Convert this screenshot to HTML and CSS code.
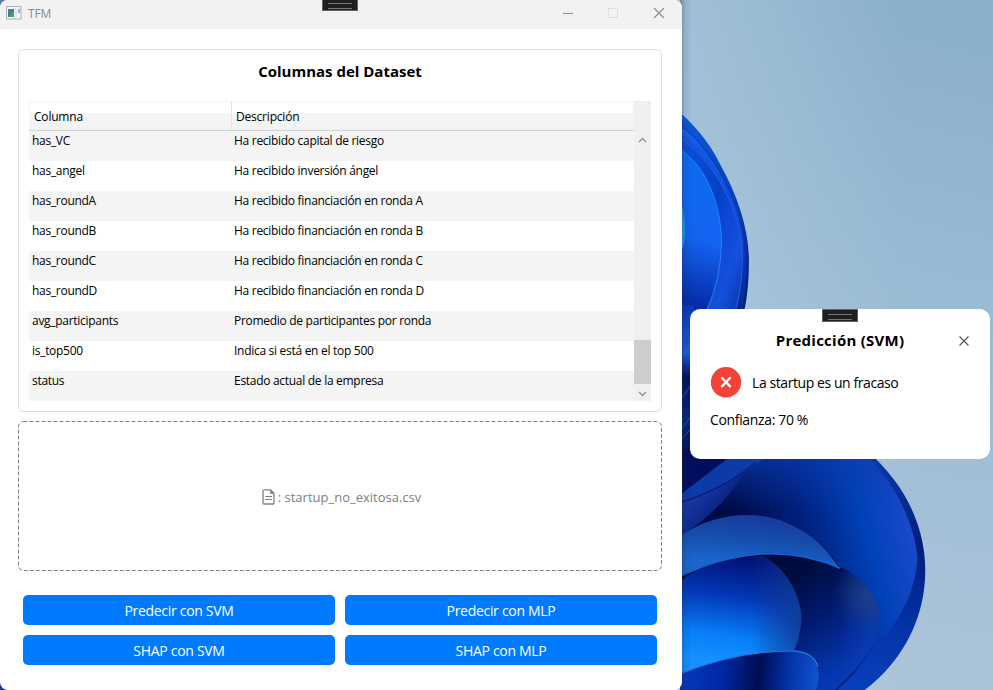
FILE: index.html
```
<!DOCTYPE html>
<html lang="es">
<head>
<meta charset="utf-8">
<title>TFM</title>
<link rel="stylesheet" href="styles.css">
</head>
<body>
<svg class="wallpaper" viewBox="0 0 993 690" aria-hidden="true">
  <defs>
    <linearGradient id="sky" gradientUnits="userSpaceOnUse" x1="960" y1="0" x2="800" y2="690"><stop offset="0" stop-color="#8aafcb"/><stop offset=".45" stop-color="#9bbcd5"/><stop offset="1" stop-color="#adc4d9"/></linearGradient>
    <linearGradient id="skyLeft" gradientUnits="userSpaceOnUse" x1="682" y1="0" x2="900" y2="0"><stop offset="0" stop-color="#b4cfe0" stop-opacity=".5"/><stop offset="1" stop-color="#b4cfe0" stop-opacity="0"/></linearGradient>
    <linearGradient id="p1" x1="0" y1="0" x2="0" y2="1"><stop offset="0" stop-color="#0f5cdf"/><stop offset=".5" stop-color="#0738b5"/><stop offset="1" stop-color="#001560"/></linearGradient>
    <linearGradient id="p2" x1="0" y1="0" x2="0" y2="1"><stop offset="0" stop-color="#1064ee"/><stop offset=".5" stop-color="#0f49d2"/><stop offset="1" stop-color="#03248c"/></linearGradient>
    <linearGradient id="p3" x1="0" y1="0" x2="1" y2="1"><stop offset="0" stop-color="#0b55e0"/><stop offset=".5" stop-color="#0541c8"/><stop offset=".8" stop-color="#1550dc"/><stop offset="1" stop-color="#0534ac"/></linearGradient>
    <linearGradient id="p4" gradientUnits="userSpaceOnUse" x1="718" y1="190" x2="682" y2="300"><stop offset="0" stop-color="#0d68f2"/><stop offset=".45" stop-color="#1563f0"/><stop offset="1" stop-color="#062ba8"/></linearGradient>
    <linearGradient id="strip" x1="0" y1="0" x2="0" y2="1"><stop offset="0" stop-color="#0938b8"/><stop offset=".3" stop-color="#1a5cdf"/><stop offset=".45" stop-color="#020f5d"/><stop offset=".7" stop-color="#062583"/><stop offset="1" stop-color="#010a48"/></linearGradient>
    <linearGradient id="outer" x1="0" y1="0" x2="0" y2="1"><stop offset="0" stop-color="#0b3cab"/><stop offset=".4" stop-color="#001d7c"/><stop offset=".75" stop-color="#0434a8"/><stop offset="1" stop-color="#0740bd"/></linearGradient>
    <linearGradient id="face" gradientUnits="userSpaceOnUse" x1="735" y1="545" x2="918" y2="500"><stop offset="0" stop-color="#000a45"/><stop offset=".38" stop-color="#00207e"/><stop offset=".7" stop-color="#0042b8"/><stop offset="1" stop-color="#214bd0"/></linearGradient>
    <linearGradient id="faceTop" gradientUnits="userSpaceOnUse" x1="0" y1="450" x2="0" y2="510"><stop offset="0" stop-color="#0b3cb0" stop-opacity=".7"/><stop offset="1" stop-color="#0b3cb0" stop-opacity="0"/></linearGradient>
    <linearGradient id="band" gradientUnits="userSpaceOnUse" x1="740" y1="515" x2="735" y2="562"><stop offset="0" stop-color="#183b9c"/><stop offset=".5" stop-color="#154ead"/><stop offset="1" stop-color="#1a66cc"/></linearGradient>
    <linearGradient id="hollow" gradientUnits="userSpaceOnUse" x1="800" y1="570" x2="860" y2="660"><stop offset="0" stop-color="#000b3d"/><stop offset=".45" stop-color="#001a6f"/><stop offset="1" stop-color="#0638b3"/></linearGradient>
    <radialGradient id="hollowEdge" gradientUnits="userSpaceOnUse" cx="868" cy="595" r="36"><stop offset="0" stop-color="#2e4a80" stop-opacity=".6"/><stop offset="1" stop-color="#2e4a80" stop-opacity="0"/></radialGradient>
    <linearGradient id="hollowFade" gradientUnits="userSpaceOnUse" x1="840" y1="0" x2="884" y2="0"><stop offset="0" stop-color="#0a3fb4" stop-opacity="0"/><stop offset="1" stop-color="#0a3fb4" stop-opacity=".75"/></linearGradient>
    <linearGradient id="bright" gradientUnits="userSpaceOnUse" x1="750" y1="557" x2="735" y2="665"><stop offset="0" stop-color="#001070"/><stop offset=".38" stop-color="#0238b8"/><stop offset=".75" stop-color="#087ff8"/><stop offset="1" stop-color="#1690ff"/></linearGradient>
    <linearGradient id="brightEdge" gradientUnits="userSpaceOnUse" x1="750" y1="0" x2="802" y2="0"><stop offset="0" stop-color="#123a91" stop-opacity="0"/><stop offset="1" stop-color="#123a91" stop-opacity=".85"/></linearGradient>
    <linearGradient id="floor" gradientUnits="userSpaceOnUse" x1="682" y1="675" x2="820" y2="690"><stop offset="0" stop-color="#0338be"/><stop offset=".3" stop-color="#0027a0"/><stop offset=".55" stop-color="#000c50"/><stop offset=".75" stop-color="#0330a4"/><stop offset="1" stop-color="#1257d4"/></linearGradient>
    <linearGradient id="leaf" gradientUnits="userSpaceOnUse" x1="682" y1="500" x2="715" y2="530"><stop offset="0" stop-color="#1a3ba8"/><stop offset=".5" stop-color="#0f2c90"/><stop offset="1" stop-color="#06196c"/></linearGradient>
    <linearGradient id="shade" gradientUnits="userSpaceOnUse" x1="681" y1="0" x2="692" y2="0"><stop offset="0" stop-color="#1e2832" stop-opacity=".35"/><stop offset=".3" stop-color="#1e2832" stop-opacity=".12"/><stop offset="1" stop-color="#1e2832" stop-opacity="0"/></linearGradient>
  </defs>
  <rect width="993" height="690" fill="url(#sky)"/>
  <rect x="670" width="323" height="690" fill="url(#skyLeft)"/>
  <rect width="10" height="10" fill="#5b7f9f"/>
  <rect y="670" width="20" height="20" fill="#0d3d94"/>

  <path d="M670 104Q704 131 720 164Q748 214 749 260Q749 290 744 312V340H670Z" fill="url(#p1)"/>
  <path d="M670 118C714 143 743 210 745 246Q747 285 741 312H670Z" fill="url(#p2)" stroke="#0735a4"/>
  <path d="M670 126C706 147 733 194 741 234Q746 274 736 312H670Z" fill="#1553dc"/>
  <path d="M670 132C711 153 738 207 742 245Q744 280 735 312H670Z" fill="url(#p3)" stroke="#2360df" stroke-width=".8"/>
  <path d="M670 143C708 162 721 207 721.500 242Q721 280 706 312H670Z" fill="url(#p4)" stroke="#2c80f5"/>
  <path d="M680 197Q687 220 684 244L680 255Z" fill="#2b9cf0"/>
  <rect x="680" y="305" width="14" height="160" fill="url(#strip)"/>
  <path d="M681 355L694 325M681 400L694 380M681 430L694 412M681 440L694 425" stroke="#174fbd"/>

  <path d="M682 450H866C951 522 940 636 862 692H682Z" fill="url(#outer)"/>
  <path d="M682 450H858C890 472 914 520 917.500 557C916 589 901 619 883 637C868 650 865 667 835 692H682Z" fill="url(#face)"/>
  <path d="M682 450H858Q882 467 898 495L902 510H682Z" fill="url(#faceTop)"/>
  <path d="M680 450H770L742 477Q716 515 680 536Z" fill="url(#leaf)"/>
  <path d="M680 450H745Q718 481 680 503Z" fill="#020d5d"/>
  <path d="M680 495L732 455H770L742 474Q718 490 680 503Z" fill="#0c3ba7"/>
  <path d="M680 503Q725 488 755 463" fill="none" stroke="#08206f" stroke-width="1.500"/>
  <path d="M680 536C717 510 766 509 797 528C816 537 829 552 840 567C858 574 880 596 881 622Q880 646 835 690H690Z" fill="url(#hollow)"/>
  <path d="M820 560L840 567C858 574 880 596 881 622Q880 646 835 690H820Z" fill="url(#hollowFade)"/>
  <path d="M830 560L840 567C858 574 880 596 881 622V640H830Z" fill="url(#hollowEdge)"/>
  <path d="M680 536C717 510 766 509 797 528C818 538 829 553 840 569C780 541 732 553 680 577Z" fill="url(#band)"/>
  <path d="M680 576C732 552 785 544 840 568" fill="none" stroke="#1460d0" stroke-width="1.800"/>
  <path d="M680 582Q705 559 763 556C791 571 803 604 801 622Q799 640 794 650Q735 651 680 674Z" fill="url(#bright)"/>
  <path d="M750 556H763C791 571 803 604 801 622Q799 640 794 650L750 652Z" fill="url(#brightEdge)"/>
  <path d="M680 675Q735 650 794 651C817 654 824 672 815 692H680Z" fill="url(#floor)"/>
  <path d="M680 674Q738 650 795 651Q814 653 818 667" fill="none" stroke="#2576dc" stroke-width="1.300"/>
  <rect x="680" width="16" height="690" fill="url(#shade)"/>
</svg>

<main class="window">
  <header class="titlebar">
    <svg class="app-icon" width="16" height="14" viewBox="0 0 16 14"><rect x=".5" y=".5" width="14.500" height="12.500" fill="#f4f5f5" stroke="#a9afb3"/><rect x="2" y="3" width="6" height="8" fill="#447f9a"/><path d="M2 11L8 5V11Z" fill="#439d75"/><rect x="9" y="3" width="2" height="8" fill="#dfe3e6"/><rect x="12" y="3" width="2" height="4" fill="#8fb8c6"/></svg>
    <span class="app-name">TFM</span>
    <svg class="controls" width="102" height="12" viewBox="0 0 102 12" fill="none"><path d="M0 6.500H10" stroke="#8f8f8f"/><rect x="45.500" y="1.500" width="9" height="9" stroke="#dedede"/><path d="M91 1L101 11M101 1L91 11" stroke="#8c8c8c" stroke-width="1.100"/></svg>
    <i class="grip"></i>
  </header>

  <section class="dataset">
    <h1>Columnas del Dataset</h1>
    <div class="grid">
      <div class="table">
        <div class="row head"><span>Columna</span><span>Descripción</span></div>
        <div class="row"><span>has_VC</span><span>Ha recibido capital de riesgo</span></div>
        <div class="row"><span>has_angel</span><span>Ha recibido inversión ángel</span></div>
        <div class="row"><span>has_roundA</span><span>Ha recibido financiación en ronda A</span></div>
        <div class="row"><span>has_roundB</span><span>Ha recibido financiación en ronda B</span></div>
        <div class="row"><span>has_roundC</span><span>Ha recibido financiación en ronda C</span></div>
        <div class="row"><span>has_roundD</span><span>Ha recibido financiación en ronda D</span></div>
        <div class="row"><span>avg_participants</span><span>Promedio de participantes por ronda</span></div>
        <div class="row"><span>is_top500</span><span>Indica si está en el top 500</span></div>
        <div class="row"><span>status</span><span>Estado actual de la empresa</span></div>
      </div>
      <div class="scrollbar">
        <svg width="9" height="6" viewBox="0 0 9 6"><path d="M1 5L4.500 1.500L8 5" fill="none" stroke="#929292" stroke-width="1.400"/></svg>
        <div class="thumb"></div>
        <svg width="9" height="6" viewBox="0 0 9 6"><path d="M1 1L4.500 4.500L8 1" fill="none" stroke="#929292" stroke-width="1.400"/></svg>
      </div>
    </div>
  </section>

  <section class="drop">
    <svg class="outline" width="644" height="150"><rect x=".5" y=".5" width="643" height="149" rx="5" fill="none" stroke="#808080" stroke-dasharray="4 2"/></svg>
    <svg width="13" height="16" viewBox="0 0 13 16" fill="none" stroke="#808080" stroke-width="1.300"><path d="M1.700 .8H8.500L12 4.300V14Q12 15 11 15H2Q1 15 1 14V1.800Q1 .8 2 .8"/><path d="M8.300 1V4.500H12Z" fill="#808080" stroke-width=".6"/><path d="M3.200 7.500H10M3.200 10.500H10" stroke-width="1"/></svg>
    <span>: startup_no_exitosa.csv</span>
  </section>

  <section class="actions">
    <button>Predecir con SVM</button>
    <button>Predecir con MLP</button>
    <button>SHAP con SVM</button>
    <button>SHAP con MLP</button>
  </section>
</main>

<aside class="popup">
  <i class="grip"></i>
  <div class="popup-head"><h2>Predicción (SVM)</h2><svg width="10" height="10" viewBox="0 0 10 10"><path d="M.5 .5L9.500 9.500M9.500 .5L.5 9.500" stroke="#505050" stroke-width="1.100"/></svg></div>
  <div class="result"><svg width="31" height="31" viewBox="0 0 31 31"><circle cx="15" cy="15.300" r="15.200" fill="#f44336"/><path d="M11 11L19 19.400M19 11L11 19.400" stroke="#fff" stroke-width="2.300" stroke-linecap="round"/></svg><span>La startup es un fracaso</span></div>
  <p>Confianza: 70 %</p>
</aside>
</body>
</html>
```
FILE: styles.css
```
* { box-sizing: border-box; }
body {
  margin: 0;
  width: 993px;
  height: 690px;
  overflow: hidden;
  position: relative;
  font-family: "Open Sans", "Noto Sans", sans-serif;
  color: #000;
}
svg { display: block; flex: none; }
h1, h2, p { margin: 0; }
.wallpaper { position: absolute; inset: 0; width: 993px; height: 690px; }

.window {
  position: absolute;
  left: 0;
  top: 0;
  width: 682px;
  height: 690px;
  border-radius: 8px;
  background: #fff;
  overflow: hidden;
}
.titlebar {
  height: 29px;
  background: #f2f2f2;
  display: flex;
  align-items: center;
  padding: 0 17px 3px 6px;
}
.app-name { margin-left: 6px; font-size: 12px; letter-spacing: -.2px; color: #8b8b8b; }
.controls { margin-left: auto; }
.grip {
  position: absolute;
  left: 322px;
  top: -2px;
  width: 36px;
  height: 13px;
  border: 1px solid #616161;
  background: #1f1f1f;
}
.grip::after {
  content: "";
  position: absolute;
  left: 5px;
  right: 5px;
  top: 4px;
  height: 4px;
  border-top: 1px solid #777;
  border-bottom: 1px solid #777;
}

.dataset {
  margin: 20px 20px 0 18px;
  height: 363px;
  border: 1px solid #dedede;
  border-radius: 5px;
  padding: 0 10px;
}
.dataset h1 { height: 51px; padding-top: 10px; font-size: 15px; line-height: 22px; text-align: center; }
.grid { display: flex; height: 300px; }
.table { width: 605px; }
.row {
  display: grid;
  grid-template-columns: 202px 403px;
  height: 30px;
  padding-top: 1px;
  font-size: 12px;
  line-height: 18px;
  letter-spacing: -.29px;
}
.row:nth-child(even) { background: #f4f4f4; }
.row span { padding-left: 3px; white-space: nowrap; }
.row.head {
  grid-template-columns: 201px 402px;
  padding: 0;
  line-height: 30px;
  background: linear-gradient(#fff 0 40%, #f5f6f8 41%, #f0f2f4);
  border: 1px solid #f4f4f4;
  border-bottom-color: #cfcfcf;
  letter-spacing: -.2px;
}
.head span { padding-left: 4px; height: 28px; }
.head span + span { border-left: 1px solid #e4e4e4; }
.scrollbar {
  width: 17px;
  background: #f0f0f0;
  display: flex;
  flex-direction: column;
  align-items: center;
  padding: 36px 0 4px;
}
.thumb { width: 17px; height: 44px; background: #cdcdcd; margin: 197px 0 auto; }

.drop {
  position: relative;
  height: 150px;
  margin: 9px 20px 0 18px;
  display: flex;
  align-items: center;
  justify-content: center;
  gap: 3px;
  padding: 2px 0 0 3px;
  color: #808080;
  font-size: 13px;
}
.outline { position: absolute; inset: 0; }

.actions {
  margin: 24px 25px 0 23px;
  display: grid;
  grid-template-columns: 312px 312px;
  gap: 10px;
}
button {
  height: 30px;
  padding: 1px 0 0;
  border: 0;
  border-radius: 5px;
  background: #007bff;
  color: #fff;
  font: 14px/20px "Open Sans", "Noto Sans", sans-serif;
  letter-spacing: -.3px;
}

.popup {
  position: absolute;
  left: 690px;
  top: 309px;
  width: 300px;
  height: 150px;
  border-radius: 10px;
  background: #fff;
  padding: 20px;
}
.popup .grip { left: 132px; top: 0; }
.popup-head { display: flex; align-items: center; height: 24px; padding-left: 11px; }
.popup h2 { flex: 1; text-align: center; font-size: 15px; line-height: 22px; letter-spacing: .25px; padding-bottom: 2px; }
.popup-head svg { margin-right: 1px; }
.result { display: flex; align-items: center; gap: 10px; height: 31px; margin: 14px 0 0 1px; font-size: 14px; letter-spacing: -.42px; }
.popup p { margin-top: 12px; font-size: 14px; line-height: 20px; letter-spacing: -.35px; }
```
